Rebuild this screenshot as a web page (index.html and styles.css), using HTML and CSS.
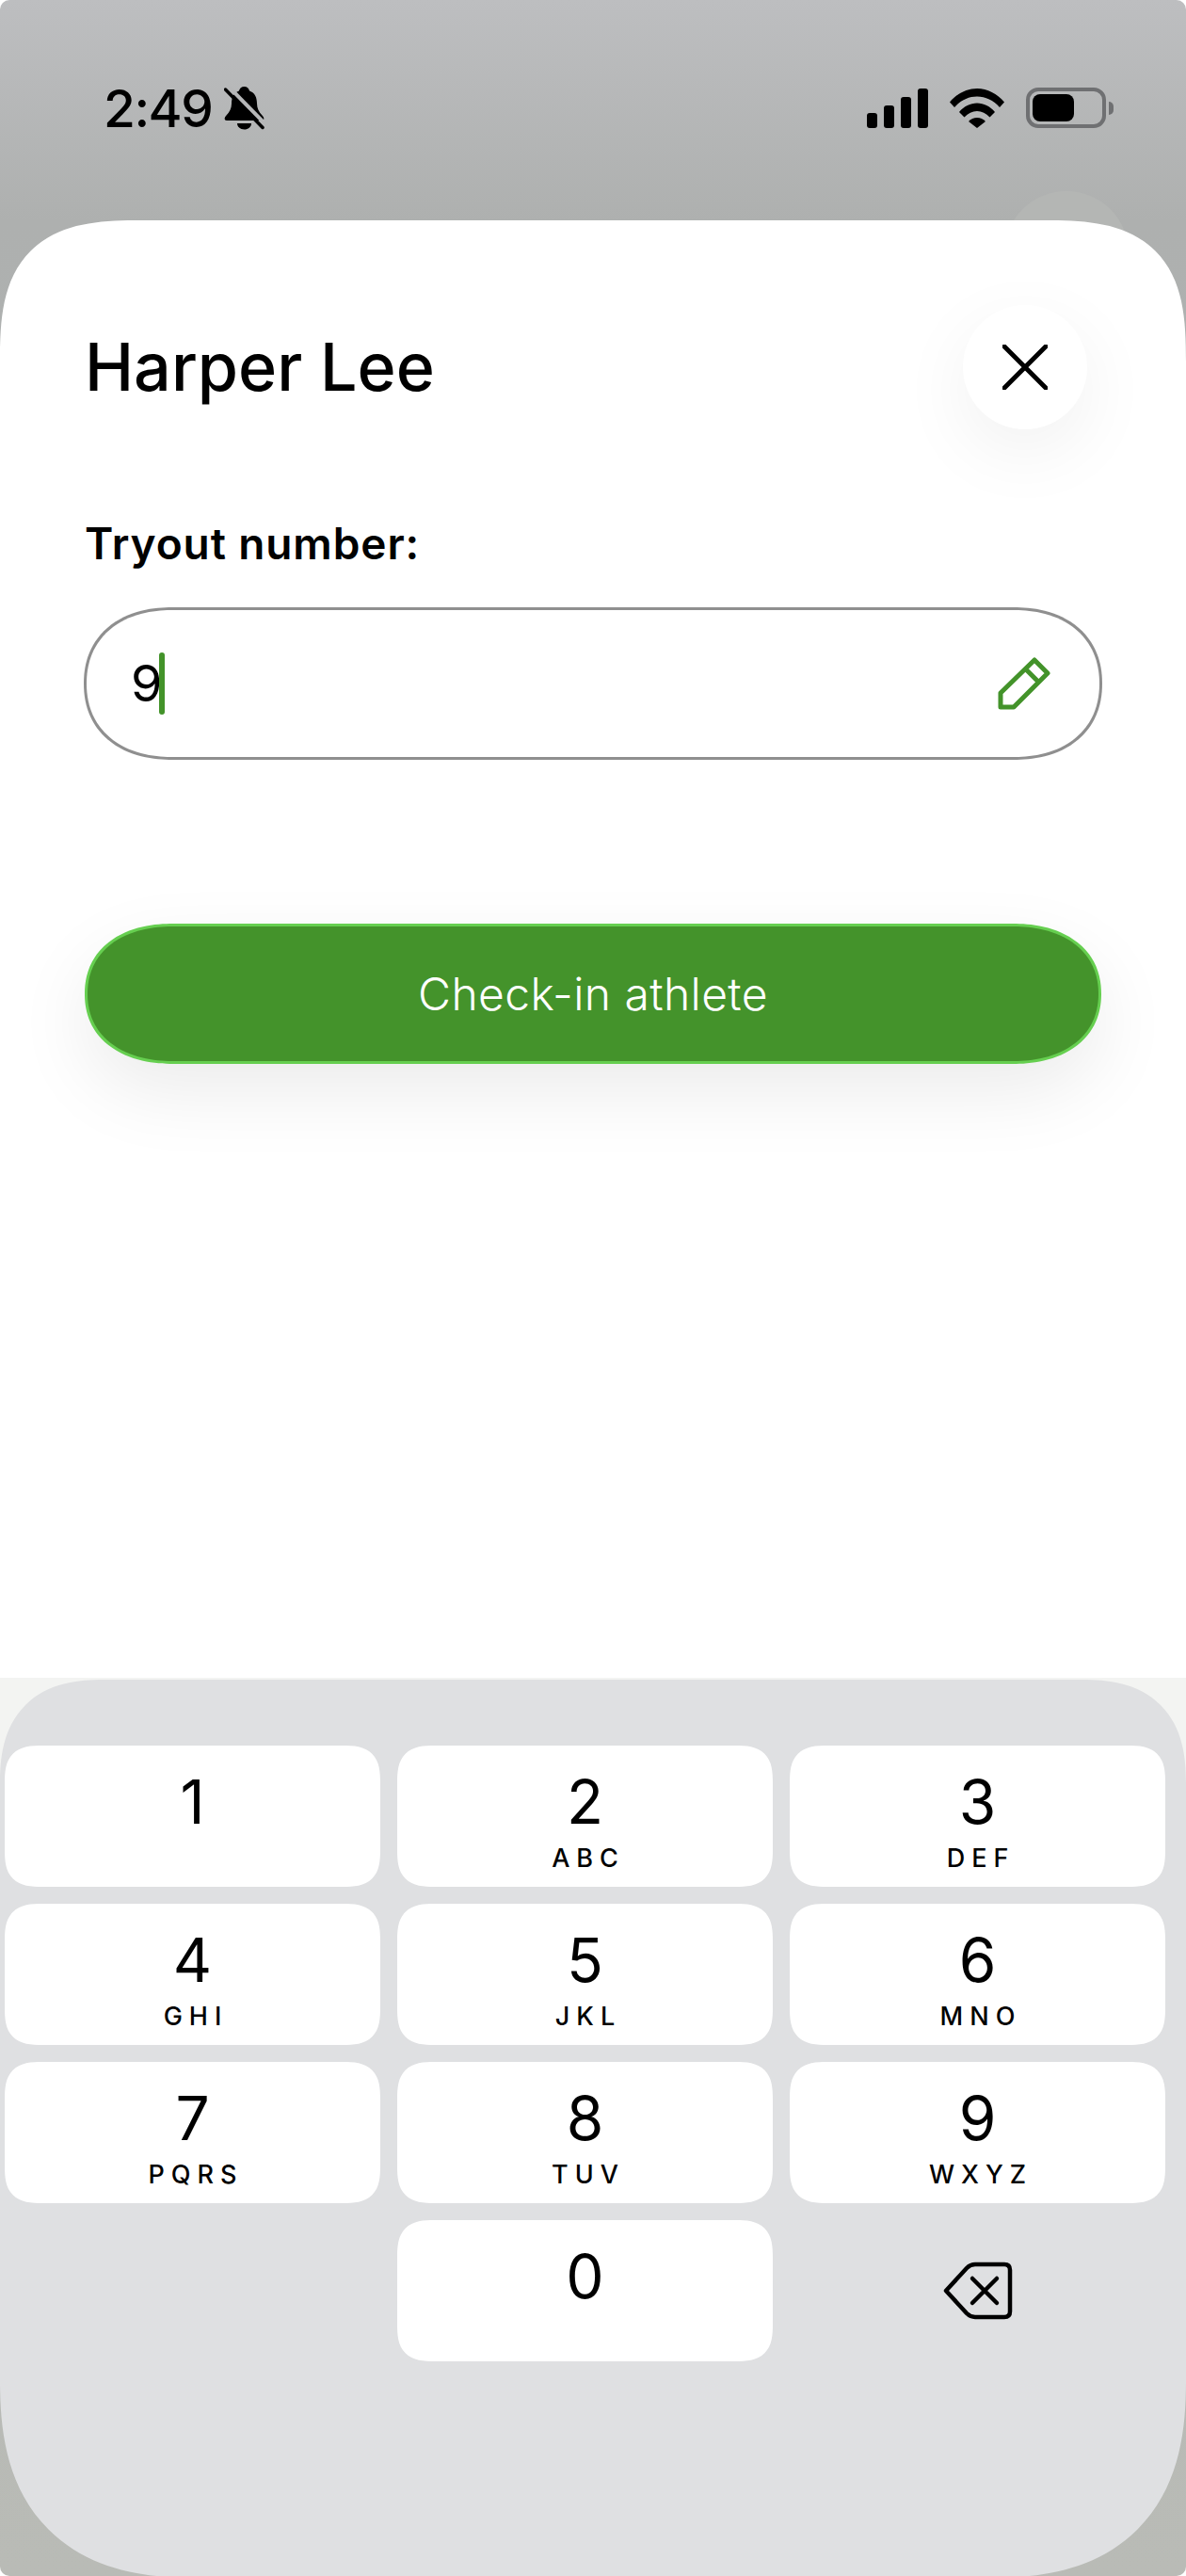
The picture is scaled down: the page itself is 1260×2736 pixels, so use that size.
FILE: index.html
```html
<!DOCTYPE html>
<html>
<head>
  <title>Check-in athlete</title>
  <link rel="stylesheet" href="styles.css">
</head>
<body>
  <div class="screen">
    <div class="status-bar">
      <div class="status-left">
        <span class="time">2:49</span>
        <svg class="bell" viewBox="0 0 43 46">
          <path d="M21.500 0c-3 0-5 2-5.500 4.500C10 6.500 8 12 8 18c0 5-2 9-5.500 12.500C0 33 0 36 3 36h37c3 0 3-3 .5-5.500C37 27 35 23 35 18c0-6-2-11.500-8-13.500C26.500 2 24.500 0 21.500 0z"/>
          <path d="M14 39h15c0 4-3.500 6.500-7.500 6.500S14 43 14 39z"/>
          <path d="M5 0l40 41" class="bell-gap"/>
          <path d="M1.500 3L41 43.500" class="bell-slash"/>
        </svg>
      </div>
      <div class="status-right">
        <div class="signal">
          <span class="bar bar-1"></span>
          <span class="bar bar-2"></span>
          <span class="bar bar-3"></span>
          <span class="bar bar-4"></span>
        </div>
        <svg class="wifi" viewBox="0 0 58 42">
          <path d="M0 14.500C7.500 5.500 18 0 29 0s21.500 5.500 29 14.500l-5 5.500C46.500 12.500 38 8.500 29 8.500S11.500 12.500 5 20z"/>
          <path d="M10 25C15 19 22 15.500 29 15.500S43 19 48 25l-5.500 5.500C38.500 26.500 34 24 29 24s-9.500 2.500-13.500 6.500z"/>
          <path d="M20 35c2.500-2.500 5.500-4 9-4s6.500 1.500 9 4l-9 7z"/>
        </svg>
        <div class="battery">
          <div class="battery-body"><span class="battery-fill"></span></div>
          <span class="battery-tip"></span>
        </div>
      </div>
    </div>

    <span class="ghost-circle"></span>

    <div class="sheet">
      <div class="sheet-head">
        <h1 class="athlete-name">Harper Lee</h1>
        <button class="close-btn" type="button">
          <svg viewBox="0 0 48 48">
            <path d="M2 2l44 44M46 2L2 46"/>
          </svg>
        </button>
      </div>

      <label class="field-label">Tryout number:</label>
      <div class="number-input">
        <span class="number-value">9</span>
        <span class="caret"></span>
        <svg class="pencil" viewBox="0 0 56 56">
          <path d="M3 38L39 3l14 14-36 36H3z"/>
          <path d="M29 12l15 15"/>
        </svg>
      </div>

      <button class="check-in" type="button">Check-in athlete</button>
    </div>

    <div class="keyboard-wrap">
      <div class="keyboard">
        <div class="keys">
          <div class="key"><span class="digit">1</span></div>
          <div class="key"><span class="digit">2</span><span class="letters">ABC</span></div>
          <div class="key"><span class="digit">3</span><span class="letters">DEF</span></div>
          <div class="key"><span class="digit">4</span><span class="letters">GHI</span></div>
          <div class="key"><span class="digit">5</span><span class="letters">JKL</span></div>
          <div class="key"><span class="digit">6</span><span class="letters">MNO</span></div>
          <div class="key"><span class="digit">7</span><span class="letters">PQRS</span></div>
          <div class="key"><span class="digit">8</span><span class="letters">TUV</span></div>
          <div class="key"><span class="digit">9</span><span class="letters">WXYZ</span></div>
          <div class="key-empty"></div>
          <div class="key"><span class="digit">0</span></div>
          <div class="key-empty delete-key">
            <svg viewBox="0 0 74 62">
              <path d="M3 31L25 7q4-4 9-4h31q6 0 6 6v44q0 6-6 6H34q-5 0-9-4L3 31z"/>
              <path d="M31 18l26 26M57 18L31 44"/>
            </svg>
          </div>
        </div>
      </div>
    </div>
  </div>
</body>
</html>
```

FILE: styles.css
```css
* {
  box-sizing: border-box;
}

html,
body {
  margin: 0;
  padding: 0;
  background-color: #fff;
}

body {
  font-family: "Inter", "Liberation Sans", sans-serif;
  color: #000;
}

.screen {
  position: relative;
  width: 1260px;
  height: 2736px;
  overflow: hidden;
  display: flex;
  flex-direction: column;
  border-radius: 10px;
  background: linear-gradient(180deg, #bdbec0 0, #aeb0af 234px, #aeb1b0 400px, #b9bbb6 100%);
}

/* status bar */
.status-bar {
  height: 234px;
  flex: none;
  display: flex;
  justify-content: space-between;
  align-items: flex-start;
  padding: 91px 77px 0 110px;
}

.status-left {
  display: flex;
  align-items: center;
  gap: 13px;
}

.time {
  font-size: 55px;
  font-weight: 500;
  line-height: 48px;
  letter-spacing: -1.5px;
}

.bell {
  width: 43px;
  height: 46px;
}

.bell path {
  fill: #000;
}

.bell .bell-gap {
  fill: none;
  stroke: #b6b7b8;
  stroke-width: 4;
}

.bell .bell-slash {
  fill: none;
  stroke: #000;
  stroke-width: 3.500;
  stroke-linecap: round;
}

.status-right {
  display: flex;
  align-items: center;
  gap: 23px;
  padding-top: 2px;
}

.signal {
  display: flex;
  align-items: flex-end;
  gap: 7px;
  height: 42px;
}

.bar {
  width: 11px;
  background-color: #000;
  border-radius: 3px;
}

.bar-1 { height: 16px; }
.bar-2 { height: 24px; }
.bar-3 { height: 33px; }
.bar-4 { height: 42px; }

.wifi {
  width: 58px;
  height: 42px;
  fill: #000;
}

.battery {
  display: flex;
  align-items: center;
  gap: 3px;
}

.battery-body {
  width: 85px;
  height: 43px;
  padding: 3px;
  border: 4px solid #6f7072;
  border-radius: 13px;
}

.battery-fill {
  display: block;
  width: 44px;
  height: 100%;
  background-color: #000;
  border-radius: 8px;
}

.battery-tip {
  width: 5px;
  height: 14px;
  background-color: #6f7072;
  border-radius: 0 5px 5px 0;
}

.ghost-circle {
  position: absolute;
  top: 203px;
  left: 1067px;
  width: 132px;
  height: 132px;
  border-radius: 50%;
  background-color: #b4b6b4;
}

/* white sheet */
.sheet {
  position: relative;
  flex: none;
  height: 1548px;
  padding: 90px 90px 0;
  background-color: #fff;
  border-radius: 150px 150px 0 0;
  corner-shape: superellipse(1.5);
}

.sheet-head {
  display: flex;
  justify-content: space-between;
  align-items: center;
  padding-right: 15px;
  margin-bottom: 93px;
}

.athlete-name {
  margin: 0;
  font-size: 70px;
  font-weight: 500;
  line-height: 132px;
}

.close-btn {
  width: 132px;
  height: 132px;
  padding: 0;
  border: none;
  border-radius: 50%;
  background-color: #fff;
  display: flex;
  align-items: center;
  justify-content: center;
  box-shadow: 0 24px 80px rgba(0, 0, 0, 0.06);
}

.close-btn svg {
  width: 48px;
  height: 48px;
  fill: none;
  stroke: #000;
  stroke-width: 5;
  stroke-linecap: round;
}

.field-label {
  display: block;
  font-size: 46px;
  font-weight: 600;
  line-height: 56px;
  letter-spacing: 0.9px;
  margin-bottom: 40px;
}

.number-input {
  display: flex;
  align-items: center;
  width: 1082px;
  height: 162px;
  margin-left: -1px;
  padding: 0 52px 0 47px;
  border: 3px solid #8f8f8f;
  border-radius: 94px / 81px;
  corner-shape: superellipse(1.15);
}

.number-value {
  font-size: 54px;
  font-weight: 400;
  line-height: 60px;
}

.caret {
  width: 6px;
  height: 66px;
  margin-left: -4px;
  background-color: #43932a;
  border-radius: 3px;
}

.pencil {
  width: 56px;
  height: 56px;
  margin-left: auto;
  fill: none;
  stroke: #43932a;
  stroke-width: 5;
  stroke-linejoin: round;
}

.check-in {
  display: block;
  width: 1080px;
  height: 149px;
  margin-top: 174px;
  border: 3px solid #66cf50;
  border-radius: 94px / 74.500px;
  corner-shape: superellipse(1.15);
  background-color: #44932b;
  color: #fff;
  font-family: inherit;
  font-size: 48px;
  font-weight: 300;
  letter-spacing: 0.4px;
  box-shadow: 0 30px 80px rgba(0, 0, 0, 0.08);
}

/* number pad */
.keyboard-wrap {
  flex: 1;
  background: linear-gradient(180deg, #f3f4f2 0, #f3f4f2 120px, transparent 120px);
}

.keyboard {
  height: 100%;
  margin-top: 2px;
  padding: 70px 22px 0 5px;
  background-color: #dfe0e2;
  border-radius: 110px 110px 210px 210px;
  corner-shape: superellipse(1.3);
}

.keys {
  display: grid;
  grid-template-columns: repeat(3, 399px);
  grid-auto-rows: 150px;
  gap: 18px;
}

.key {
  display: flex;
  flex-direction: column;
  align-items: center;
  padding-top: 26px;
  background-color: #fff;
  border-radius: 40px;
  corner-shape: superellipse(1.5);
}

.digit {
  font-size: 64px;
  line-height: 68px;
}

.letters {
  font-size: 27px;
  font-weight: 500;
  line-height: 32px;
  margin-top: 10px;
  letter-spacing: 7px;
  margin-right: -7px;
}

.delete-key {
  display: flex;
  align-items: center;
  justify-content: center;
}

.delete-key svg {
  width: 74px;
  height: 62px;
  fill: none;
  stroke: #000;
  stroke-width: 4.500;
  stroke-linecap: round;
  stroke-linejoin: round;
}
```
